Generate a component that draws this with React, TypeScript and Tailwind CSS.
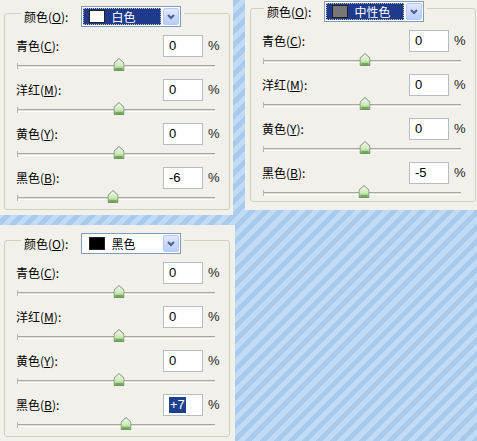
import React from "react";

type ChannelData = {
  name: string;
  key: string;
  value: string;
  shift: number;
  picked?: boolean;
};

const channels = (last: string, shift: number, picked = false): ChannelData[] => [
  { name: "青色", key: "C", value: "0", shift: 0 },
  { name: "洋红", key: "M", value: "0", shift: 0 },
  { name: "黄色", key: "Y", value: "0", shift: 0 },
  { name: "黑色", key: "B", value: last, shift, picked },
];

const cjk = "font-['Noto_Sans_CJK_SC','Noto_Sans',sans-serif]";
const latin = "font-['Liberation_Sans',Arial,sans-serif]";

function Thumb() {
  return (
    <svg width="11" height="13" viewBox="0 0 11 13" className="block">
      <defs>
        <linearGradient id="tg" x1="0" y1="0" x2="0" y2="1">
          <stop offset="0" stopColor="#f4fbee" />
          <stop offset="0.6" stopColor="#cfe8bc" />
          <stop offset="1" stopColor="#7dbb5c" />
        </linearGradient>
      </defs>
      <path d="M5.5 0.5 L10.5 5.2 V12.5 H0.5 V5.2 Z" fill="url(#tg)" stroke="#7a8f73" />
      <path d="M2 11 H9" stroke="#5fa63c" strokeWidth="1.5" />
    </svg>
  );
}

function Slider({ shift }: { shift: number }) {
  return (
    <div className="relative h-[22px]">
      <div className="absolute left-0 right-0 top-[8px] h-[3px] border-t border-[#a7a6a0] border-b border-b-white bg-[#e2e1dc]" />
      <div className="absolute left-0 top-[6px] h-[6px] w-[1px] bg-[#b8b7b0]" />
      <div
        className="absolute top-[1px] -translate-x-1/2"
        style={{ left: `calc(50% + ${shift + 3}px)` }}
      >
        <Thumb />
      </div>
    </div>
  );
}

function ChannelRow({ c }: { c: ChannelData }) {
  return (
    <div>
      <div className="flex h-[22px] items-center">
        <span className={`flex-1 text-[12px] text-black ${cjk}`}>
          {c.name}(<u>{c.key}</u>):
        </span>
        <div className={`flex h-[22px] w-[40px] items-center border border-[#b7bcc4] bg-white pl-[5px] text-[13px] text-black ${latin}`}>
          {c.picked ? (
            <span className="bg-[#1f3f8f] px-[1px] leading-[16px] text-white">{c.value}</span>
          ) : (
            c.value
          )}
        </div>
        <span className={`w-[26px] pl-[5px] text-[13px] text-[#222] ${latin}`}>%</span>
      </div>
      <div className="pl-[1px] pr-[14px]">
        <Slider shift={c.shift} />
      </div>
    </div>
  );
}

function ColorSelect({
  swatch,
  text,
  focused,
}: {
  swatch: string;
  text: string;
  focused?: boolean;
}) {
  return (
    <div className="flex h-[21px] w-[100px] border border-[#7f9db9] bg-white">
      <div className="flex-1 p-[1px]">
        <div
          className={
            focused
              ? "flex h-full items-center border border-dotted border-[#c9c9a0] bg-[#1f3a8c] text-white"
              : "flex h-full items-center border border-transparent text-black"
          }
        >
          <span className={`ml-[5px] h-[13px] w-[16px] border border-[#222] ${swatch}`} />
          <span className={`ml-[6px] text-[12px] ${cjk}`}>{text}</span>
        </div>
      </div>
      <div className="m-[1px] flex w-[16px] items-center justify-center rounded-[2px] border border-[#b6c8f4] bg-[linear-gradient(#dfe8fe,#b9cdf8)]">
        <svg width="8" height="6" viewBox="0 0 8 6">
          <path d="M1 1 L4 4 L7 1" fill="none" stroke="#4b5f8c" strokeWidth="2" />
        </svg>
      </div>
    </div>
  );
}

function Panel({
  className,
  swatch,
  text,
  focused,
  rows,
  legendGap,
}: {
  className: string;
  swatch: string;
  text: string;
  focused?: boolean;
  rows: ChannelData[];
  legendGap: string;
}) {
  return (
    <div className={`flex shrink-0 flex-col bg-[#f1f0ea] ${className}`}>
      <fieldset className="min-h-0 flex-1 rounded-[3px] border border-[#d0d0bf] pl-[11px]">
        <legend className={`px-[3px] ${legendGap}`}>
          <div className="-mb-[7px] flex h-[21px] items-center">
            <span className={`mr-[13px] text-[12px] text-black ${cjk}`}>
              颜色(<u>O</u>):
            </span>
            <ColorSelect swatch={swatch} text={text} focused={focused} />
          </div>
        </legend>
        <div className="pt-[15px]">
          {rows.map((c) => (
            <ChannelRow key={c.key} c={c} />
          ))}
        </div>
      </fieldset>
    </div>
  );
}

export default function App() {
  return (
    <div className="h-[441px] w-[477px] overflow-hidden bg-[image:repeating-linear-gradient(135deg,#c2dbf4_0px,#c2dbf4_5px,#a8caed_5px,#a8caed_10px)]">
      <div className="flex items-start gap-[12px]">
        <Panel
          className="h-[215px] w-[233px] pl-[4px] pr-[3px] pt-[6px] pb-[5px]"
          swatch="bg-white"
          text="白色"
          focused
          rows={channels("-6", -6)}
          legendGap="ml-[5px]"
        />
        <Panel
          className="h-[210px] w-[235px] pl-[5px] pr-[4px] pt-[1px] pb-[8px]"
          swatch="bg-[#777777]"
          text="中性色"
          focused
          rows={channels("-5", -1)}
          legendGap="ml-[2px]"
        />
      </div>
      <Panel
        className="mt-[10px] h-[216px] w-[235px] pl-[4px] pr-[5px] pt-[8px] pb-[4px]"
        swatch="bg-black"
        text="黑色"
        rows={channels("+7", 7, true)}
        legendGap="ml-[5px]"
      />
    </div>
  );
}
